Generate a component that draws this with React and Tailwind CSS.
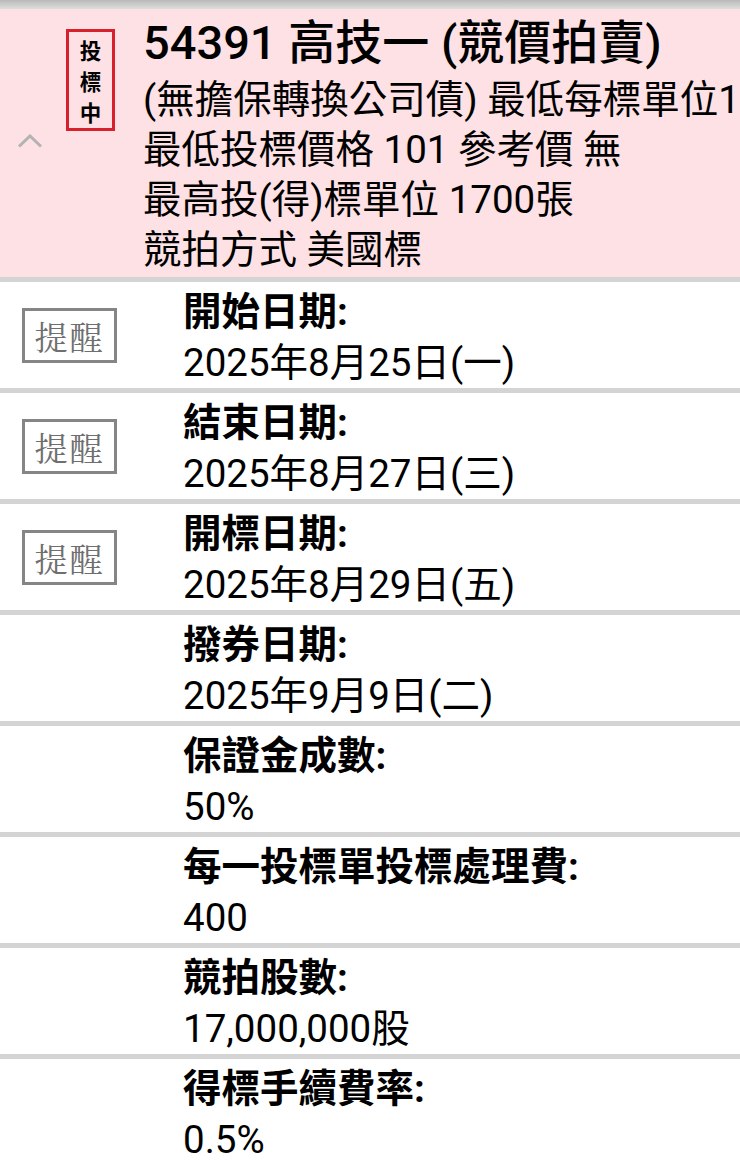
const rows = [
  { label: "開始日期:", value: "2025年8月25日(一)", remind: true },
  { label: "結束日期:", value: "2025年8月27日(三)", remind: true },
  { label: "開標日期:", value: "2025年8月29日(五)", remind: true },
  { label: "撥券日期:", value: "2025年9月9日(二)" },
  { label: "保證金成數:", value: "50%" },
  { label: "每一投標單投標處理費:", value: "400" },
  { label: "競拍股數:", value: "17,000,000股" },
  { label: "得標手續費率:", value: "0.5%" },
];

function RemindBox() {
  return (
    <div className="w-[95px] h-[55px] border-[3px] border-[#858585] bg-white flex items-center justify-center">
      <span className="text-[33px] leading-none tracking-[2px] text-[#6f6f6f] font-['Noto_Serif_CJK_TC','Noto_Sans_CJK_TC',serif]">
        提醒
      </span>
    </div>
  );
}

function InfoRow({ label, value, remind }) {
  return (
    <>
      <div className="h-[5px] bg-[#d4d4d4]"></div>
      <div className="h-[106px] flex bg-white">
        <div className="w-[183px] shrink-0 flex items-center pl-[22px]">
          {remind && <RemindBox />}
        </div>
        <div className="pt-[4px] text-[38.5px] leading-[51px] text-black whitespace-nowrap">
          <div className="font-bold">{label}</div>
          <div>{value}</div>
        </div>
      </div>
    </>
  );
}

export default function App() {
  return (
    <div className="w-[740px] h-[1160px] overflow-hidden bg-white font-['Roboto','Noto_Sans_CJK_TC',sans-serif]">
      {/* top shadow bar */}
      <div className="h-[9px] bg-gradient-to-b from-[#b9b9b9] to-[#dedede]"></div>

      {/* header */}
      <div className="h-[268px] flex bg-[#fde1e4] overflow-hidden">
        <div className="w-[66px] shrink-0 pt-[125px] pl-[17px]">
          <svg width="26" height="14" viewBox="0 0 26 14" fill="none">
            <polyline points="2,12.5 13,2 24,12.5" stroke="#b3b3b3" strokeWidth="3" />
          </svg>
        </div>
        <div className="w-[77px] shrink-0 pt-[20px]">
          <div className="w-[49px] h-[102px] border-[3px] border-[#d8202c] flex flex-col items-center justify-center font-['Noto_Sans_CJK_TC',serif] font-bold text-[21.5px] leading-[31px] text-black">
            <span>投</span>
            <span>標</span>
            <span>中</span>
          </div>
        </div>
        <div className="flex-1 min-w-0 whitespace-nowrap text-black">
          <div className="mt-[5px] text-[47px] leading-[57px] font-medium">
            54391 高技一 (競價拍賣)
          </div>
          <div className="mt-[4px] text-[38.5px] leading-[50px]">
            <div>(無擔保轉換公司債) 最低每標單位1</div>
            <div>最低投標價格 101 參考價 無</div>
            <div>最高投(得)標單位 1700張</div>
            <div>競拍方式 美國標</div>
          </div>
        </div>
      </div>

      {rows.map((r) => (
        <InfoRow key={r.label} {...r} />
      ))}
    </div>
  );
}
